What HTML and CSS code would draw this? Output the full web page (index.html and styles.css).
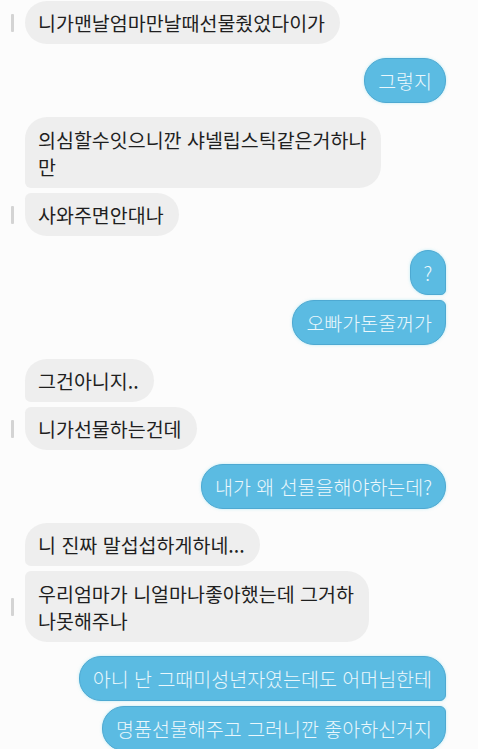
FILE: index.html
```html
<!DOCTYPE html>
<html lang="ko">
<head>
<meta charset="utf-8">
<link rel="stylesheet" href="styles.css">
</head>
<body>
<div class="chat">
  <div class="group in">
    <div class="row"><span class="mark"></span><div class="bubble gray solo">니가맨날엄마만날때선물줬었다이가</div></div>
  </div>
  <div class="group out">
    <div class="bubble blue solo">그렇지</div>
  </div>
  <div class="group in">
    <div class="row"><span class="mark off"></span><div class="bubble gray first multi">의심할수잇으니깐 샤넬립스틱같은거하나<br>만</div></div>
    <div class="row"><span class="mark"></span><div class="bubble gray last">사와주면안대나</div></div>
  </div>
  <div class="group out">
    <div class="bubble blue first q">?</div>
    <div class="bubble blue last">오빠가돈줄꺼가</div>
  </div>
  <div class="group in">
    <div class="row"><span class="mark off"></span><div class="bubble gray first">그건아니지..</div></div>
    <div class="row"><span class="mark"></span><div class="bubble gray last">니가선물하는건데</div></div>
  </div>
  <div class="group out">
    <div class="bubble blue solo">내가 왜 선물을해야하는데?</div>
  </div>
  <div class="group in">
    <div class="row"><span class="mark off"></span><div class="bubble gray first">니 진짜 말섭섭하게하네...</div></div>
    <div class="row"><span class="mark"></span><div class="bubble gray last multi">우리엄마가 니얼마나좋아했는데 그거하<br>나못해주나</div></div>
  </div>
  <div class="group out">
    <div class="bubble blue first">아니 난 그때미성년자였는데도 어머님한테</div>
    <div class="bubble blue last">명품선물해주고 그러니깐 좋아하신거지</div>
  </div>
</div>
</body>
</html>
```

FILE: styles.css
```css
html, body {
  margin: 0;
  padding: 0;
  background: #fcfcfc;
}
body {
  width: 478px;
  height: 749px;
  overflow: hidden;
  font-family: "Noto Sans CJK KR", "Noto Sans", sans-serif;
}
.chat {
  display: flex;
  flex-direction: column;
  gap: 14px;
  padding: 1px 32px 0 11px;
}
.group {
  display: flex;
  flex-direction: column;
  gap: 5px;
}
.group.out {
  align-items: flex-end;
}
.group.in {
  align-items: flex-start;
}
.row {
  display: flex;
  align-items: center;
  gap: 11px;
}
.mark {
  width: 3px;
  height: 18px;
  background: #d4d4d4;
  border-radius: 1px;
  flex: none;
}
.mark.off {
  visibility: hidden;
}
.bubble {
  font-size: 19.5px;
  line-height: 27px;
  padding: 8px 15px 8px 13px;
  white-space: nowrap;
  letter-spacing: 0;
}
.bubble.multi {
  padding-top: 9px;
  padding-bottom: 8px;
}
.gray {
  background: #eeeeee;
  color: #1f1f1f;
  border-radius: 22px;
}
.gray.first {
  border-radius: 22px 22px 22px 6px;
}
.gray.last {
  border-radius: 6px 22px 22px 22px;
}
.blue {
  background: #5bbbe2;
  color: #eaf7fc;
  border: 1px solid #4ea9d2;
  border-radius: 22px;
  padding: 8px 13px;
  box-shadow: 0 0 3px rgba(120, 220, 240, 0.5);
  font-weight: 300;
}
.blue.first {
  border-radius: 22px 22px 6px 22px;
}
.blue.last {
  border-radius: 22px 6px 22px 22px;
}
.blue.q {
  padding: 8px 12px;
  min-width: 10px;
  text-align: center;
}
```
